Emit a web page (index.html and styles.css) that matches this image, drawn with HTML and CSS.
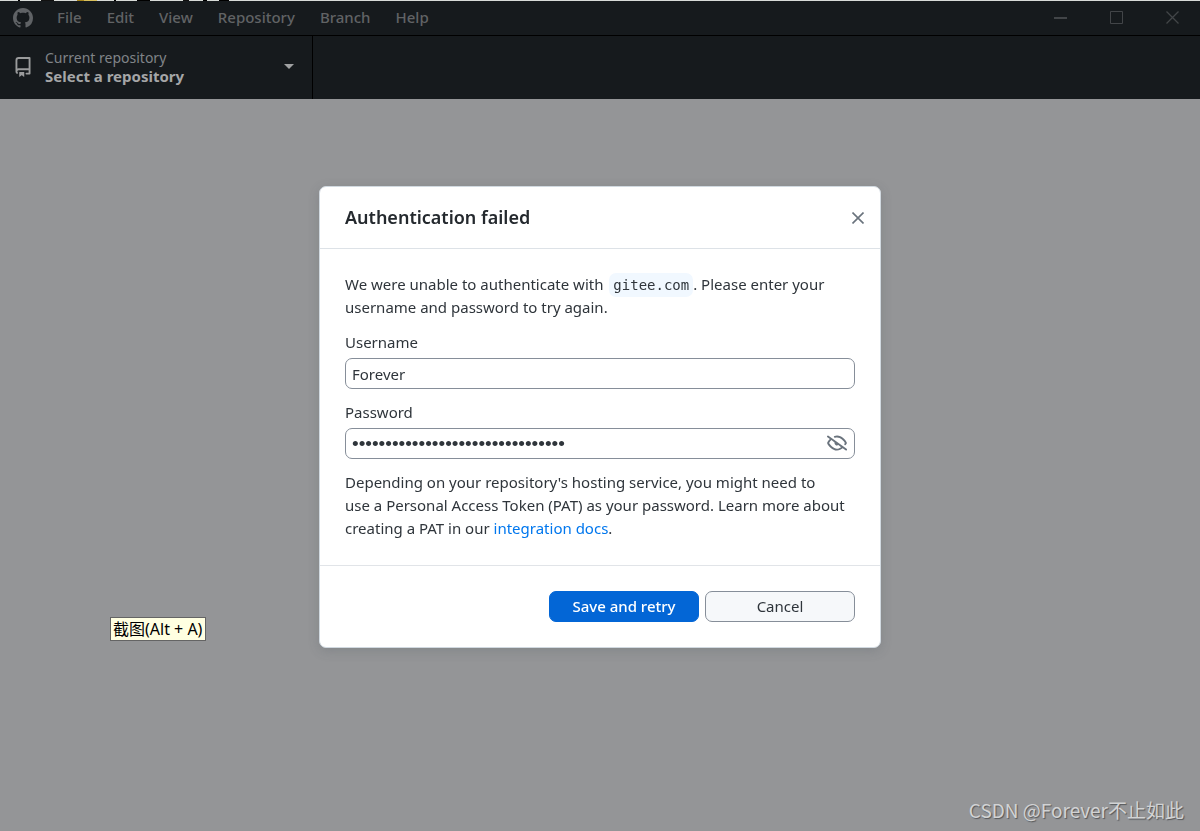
FILE: index.html
```html
<!DOCTYPE html>
<html lang="en">
<head>
<meta charset="utf-8">
<title>GitHub Desktop</title>
<link rel="stylesheet" href="styles.css">
</head>
<body>
<div class="window">
  <header class="titlebar">
    <svg class="logo" viewBox="0 0 16 16" aria-hidden="true"><path d="M8 0C3.58 0 0 3.58 0 8c0 3.54 2.29 6.53 5.47 7.59.4.07.55-.17.55-.38 0-.19-.01-.82-.01-1.49-2.01.37-2.53-.49-2.69-.94-.09-.23-.48-.94-.82-1.13-.28-.15-.68-.52-.01-.53.63-.01 1.08.58 1.23.82.72 1.21 1.87.87 2.33.66.07-.52.28-.87.51-1.07-1.78-.2-3.64-.89-3.64-3.95 0-.87.31-1.59.82-2.15-.08-.2-.36-1.02.08-2.12 0 0 .67-.21 2.2.82.64-.18 1.32-.27 2-.27s1.36.09 2 .27c1.53-1.04 2.2-.82 2.2-.82.44 1.1.16 1.92.08 2.12.51.56.82 1.27.82 2.15 0 3.07-1.87 3.75-3.65 3.95.29.25.54.73.54 1.48 0 1.07-.01 1.93-.01 2.2 0 .21.15.46.55.38A8.01 8.01 0 0 0 16 8c0-4.42-3.58-8-8-8Z"/></svg>
    <nav class="menu">
      <button class="menu-item">File</button>
      <button class="menu-item">Edit</button>
      <button class="menu-item">View</button>
      <button class="menu-item">Repository</button>
      <button class="menu-item">Branch</button>
      <button class="menu-item">Help</button>
    </nav>
    <div class="window-controls">
      <button class="window-control" aria-label="Minimize"><svg viewBox="0 0 13 13"><path d="M0 7h13" stroke-width="2"/></svg></button>
      <button class="window-control" aria-label="Maximize"><svg viewBox="0 0 13 13"><path d="M.5.5h12v12H.5z"/></svg></button>
      <button class="window-control" aria-label="Close"><svg viewBox="0 0 13 13"><path d="M.5.5l12 12M12.5.5l-12 12" stroke-width="1.3"/></svg></button>
    </div>
  </header>
  <div class="toolbar">
    <button class="repo-picker">
      <svg class="repo-icon" viewBox="0 0 16 16" aria-hidden="true"><path d="M2 2.5A2.5 2.5 0 0 1 4.5 0h8.75a.75.75 0 0 1 .75.75v12.5a.75.75 0 0 1-.75.75h-2.5a.75.75 0 0 1 0-1.5h1.75v-2h-8a1 1 0 0 0-.714 1.7.75.75 0 1 1-1.072 1.05A2.495 2.495 0 0 1 2 11.5Zm10.5-1h-8a1 1 0 0 0-1 1v6.708A2.486 2.486 0 0 1 4.5 9h8ZM5 12.25a.25.25 0 0 1 .25-.25h3.5a.25.25 0 0 1 .25.25v3.25a.25.25 0 0 1-.4.2l-1.45-1.087a.249.249 0 0 0-.3 0L5.4 15.7a.25.25 0 0 1-.4-.2Z"/></svg>
      <span class="repo-text"><span class="repo-caption">Current repository</span><strong class="repo-name">Select a repository</strong></span>
      <svg class="caret" viewBox="0 0 10 5" aria-hidden="true"><path d="M0 0h10L5 5z"/></svg>
    </button>
  </div>
  <div class="tooltip" role="tooltip">截图(Alt + A)</div>
  <div class="watermark">CSDN @Forever不止如此</div>
</div>
<div class="overlay">
  <form class="dialog" role="dialog" aria-labelledby="dialog-title">
    <div class="dialog-header">
      <h1 class="dialog-title" id="dialog-title">Authentication failed</h1>
      <button class="close" type="button" aria-label="Close"><svg viewBox="0 0 12 12"><path d="M.5.5l11 11M11.5.5l-11 11"/></svg></button>
    </div>
    <div class="dialog-body">
      <p class="text">We were unable to authenticate with <code class="host">gitee.com</code>. Please enter your username and password to try again.</p>
      <div class="field">
        <label class="label" for="username">Username</label>
        <input class="input" id="username" type="text" value="Forever">
      </div>
      <div class="field">
        <label class="label" for="password">Password</label>
        <div class="password-box">
          <input class="input password" id="password" type="password" value="xxxxxxxxxxxxxxxxxxxxxxxxxxxxxxxx">
          <button class="reveal" type="button" aria-label="Show password"><svg viewBox="0 0 16 16"><path d="M.143 2.31a.75.75 0 0 1 1.047-.167l14.5 10.5a.75.75 0 1 1-.88 1.214l-2.248-1.628C11.346 13.19 9.792 14 8 14c-1.981 0-3.67-.992-4.933-2.078C1.797 10.832.88 9.577.43 8.9a1.619 1.619 0 0 1 0-1.797c.353-.533.995-1.42 1.868-2.305L.31 3.357A.75.75 0 0 1 .143 2.31Zm1.536 5.622A.12.12 0 0 0 1.657 8c0 .021.006.045.022.068.412.621 1.242 1.75 2.366 2.717C5.175 11.758 6.527 12.5 8 12.5c1.195 0 2.31-.488 3.29-1.191L9.063 9.695A2 2 0 0 1 6.058 7.52L3.529 5.688a14.207 14.207 0 0 0-1.85 2.244ZM8 3.5c-.516 0-1.017.09-1.499.251a.75.75 0 1 1-.473-1.423A6.207 6.207 0 0 1 8 2c1.981 0 3.67.992 4.933 2.078 1.27 1.091 2.187 2.345 2.637 3.023a1.62 1.62 0 0 1 0 1.798c-.11.166-.248.365-.41.587a.75.75 0 1 1-1.21-.887c.148-.201.272-.382.371-.53a.119.119 0 0 0 0-.137c-.412-.621-1.242-1.75-2.366-2.717C10.825 4.242 9.473 3.5 8 3.5Z"/></svg></button>
        </div>
      </div>
      <p class="text">Depending on your repository's hosting service, you might need to<br>use a Personal Access Token (PAT) as your password. Learn more about creating a PAT in our <a class="link" href="#docs">integration docs</a>.</p>
    </div>
    <div class="dialog-footer">
      <button class="button primary" type="submit">Save and retry</button>
      <button class="button" type="button">Cancel</button>
    </div>
  </form>
</div>
</body>
</html>
```
FILE: styles.css
```css
* { box-sizing: border-box; }

body {
  margin: 0;
  background: #949597;
  color: #2f353b;
  font: 15px/23px "Noto Sans", "Noto Sans CJK SC", sans-serif;
}

button {
  padding: 0;
  border: 0;
  background: none;
  color: inherit;
  font: inherit;
}

.window {
  position: relative;
  min-height: 100vh;
}

/* Title bar, with a sliver of the window behind it along the top edge */
.titlebar {
  display: flex;
  align-items: center;
  height: 36px;
  padding-left: 13px;
  border-bottom: 1px solid #000;
  background:
    linear-gradient(90deg, #d8dbd8 18px, #000 18px 20px, #d8dbd8 20px 41px, #111 41px 54px, #d8dbd8 54px 77px, #a8861c 77px 84px, #d9c05c 84px 97px, #d8dbd8 97px 114px, #000 114px 116px, #d8dbd8 116px 137px, #000 137px 150px, #d8dbd8 150px 183px, #111 183px 189px, #d8dbd8 189px 203px, #000 203px 207px, #d8dbd8 207px 219px, #000 219px 229px, #d8dbd8 229px) top / 100% 1px no-repeat,
    #161a1d;
}

.logo {
  width: 20px;
  height: 20px;
  fill: #5f6265;
}

.menu {
  display: flex;
  gap: 25px;
  margin-left: 24px;
}

.menu-item {
  color: #616365;
  font-weight: 500;
}

.window-controls {
  display: flex;
  margin-left: auto;
}

.window-control {
  display: grid;
  place-items: center;
  width: 56px;
  height: 35px;
}

.window-control svg {
  width: 13px;
  height: 13px;
  fill: none;
  stroke: #424548;
}

.toolbar {
  display: flex;
  height: 63px;
  background: #161a1d;
}

.repo-picker {
  display: flex;
  align-items: center;
  width: 313px;
  padding: 0 18px 2px 13px;
  border-right: 1px solid #000;
  text-align: left;
}

.repo-icon {
  width: 20px;
  height: 20px;
  margin-right: 12px;
  fill: #9a9b9c;
}

.repo-text {
  display: flex;
  flex: 1;
  flex-direction: column;
  font-size: 14px;
  line-height: 18px;
}

.repo-caption { color: #808488; }

.repo-name {
  color: #a5a6a7;
  font-size: 15px;
}

.caret {
  width: 10px;
  height: 5px;
  fill: #a0a1a2;
}

.tooltip {
  position: absolute;
  top: 617px;
  left: 110px;
  padding: 0 3px 0 2px;
  border: 1px solid #646464;
  background: #ffffe1;
  color: #000;
  font-size: 16px;
  line-height: 22px;
}

.watermark {
  position: absolute;
  right: 16px;
  bottom: 9px;
  color: #d2d3d4;
  font: 19px/25px "Noto Sans CJK SC", sans-serif;
  text-shadow: 1px 1px 1px #55575a;
}

/* Modal dialog */
.overlay {
  position: fixed;
  inset: 0;
  display: grid;
  place-items: center;
  padding-top: 3px;
}

.dialog {
  width: 562px;
  max-width: 100%;
  border: 1px solid #d1d9e0;
  border-radius: 7px;
  background: #fff;
  box-shadow: 0 3px 12px rgba(66, 74, 83, 0.2);
}

.dialog-header {
  display: flex;
  align-items: center;
  justify-content: space-between;
  height: 62px;
  padding: 0 16px 0 25px;
  border-bottom: 1px solid #dde2e7;
}

.dialog-title {
  margin: 0;
  color: #24292e;
  font-size: 18px;
  font-weight: 600;
}

.close {
  display: grid;
  width: 12px;
  height: 12px;
}

.close svg {
  fill: none;
  stroke: #6a737d;
  stroke-width: 1.6;
}

.dialog-body {
  display: flex;
  flex-direction: column;
  gap: 12px;
  padding: 24px 25px 25px;
}

.text { margin: 0; }

.host {
  margin-left: 2px;
  padding: 4px;
  border-radius: 7px;
  background: #f1f8ff;
  font: 14px "DejaVu Sans Mono", monospace;
}

.field {
  display: flex;
  flex-direction: column;
  gap: 4px;
}

.input {
  width: 100%;
  height: 31px;
  padding: 0 6px;
  border: 1px solid #868e99;
  border-radius: 7px;
  outline: 0;
  background: #fff;
  color: #2f353b;
  font: inherit;
}

.password-box {
  position: relative;
  display: flex;
}

.password {
  padding-right: 36px;
  font: 19px "Liberation Sans", sans-serif;
}

.reveal {
  position: absolute;
  top: 5px;
  right: 8px;
  display: grid;
  width: 20px;
  height: 20px;
}

.reveal svg { fill: #6a737d; }

.link {
  color: #0077ee;
  text-decoration: none;
}

.dialog-footer {
  display: flex;
  justify-content: flex-end;
  gap: 6px;
  padding: 25px;
  border-top: 1px solid #e1e4e8;
}

.button {
  width: 150px;
  height: 31px;
  border: 1px solid #868e99;
  border-radius: 7px;
  background: #f6f8fa;
}

.primary {
  border-color: #0366d6;
  background: #0366d6;
  color: #fff;
  font-weight: 500;
}
```
